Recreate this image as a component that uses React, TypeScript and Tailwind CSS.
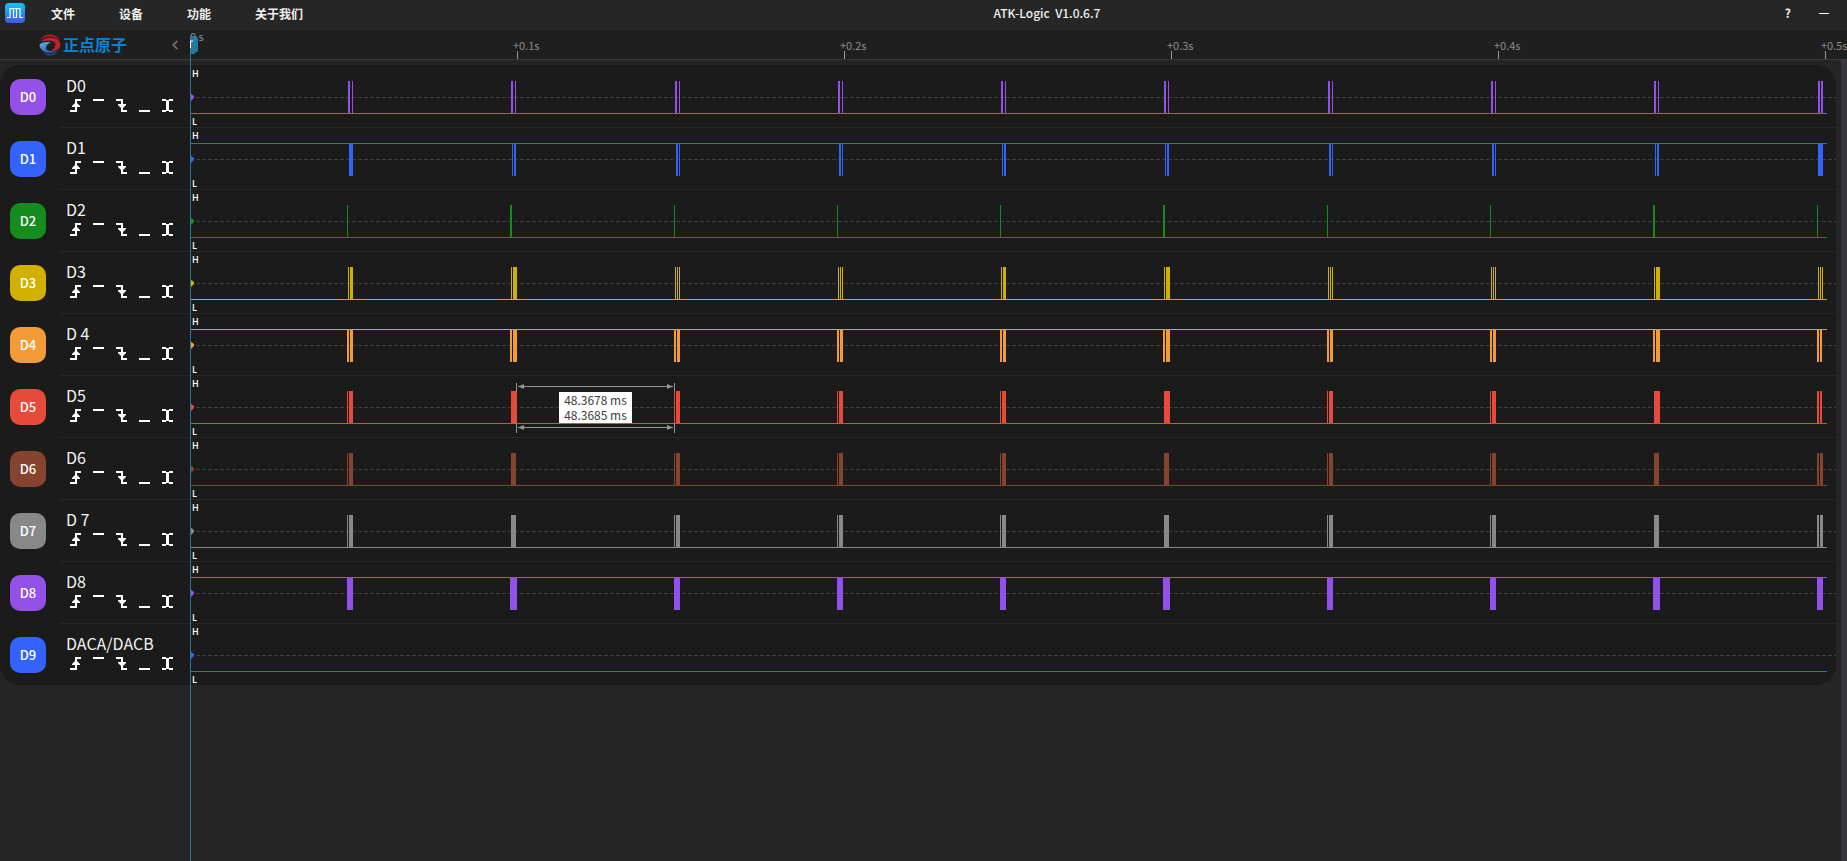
import React from 'react';
import { ChevronLeft } from 'lucide-react';

// [offset, width] in pixels, measured from the start of a burst
type Bar = [number, number];

interface Channel {
  id: string;
  name: string;
  color: string;
  idleHigh?: boolean;
  // one entry per burst shape, see BURSTS
  shapes?: Bar[][];
}

const MENU = ['文件', '设备', '功能', '关于我们'];
const TICKS = ['+0.1s', '+0.2s', '+0.3s', '+0.4s', '+0.5s'];
const WAVE_END = 1637;

// start of each burst and the index of the shape it uses
const BURSTS: [number, number][] = [
  [157, 0],
  [320, 1],
  [484, 2],
  [647, 2],
  [810, 3],
  [973, 1],
  [1137, 2],
  [1300, 2],
  [1463, 1],
  [1627, 4],
];

const CHANNELS: Channel[] = [
  {
    id: 'D0', name: 'D0', color: '#9351e8',
    shapes: [[[1, 2], [5, 1]], [[1, 2], [5, 1]], [[1, 2], [5, 1]], [[1, 2], [5, 1]], [[1, 2], [4, 2]]],
  },
  {
    id: 'D1', name: 'D1', color: '#3363fa', idleHigh: true,
    shapes: [[[2, 4]], [[2, 1], [4, 2]], [[2, 2], [5, 1]], [[2, 1], [4, 2]], [[1, 5]]],
  },
  {
    id: 'D2', name: 'D2', color: '#168c1e',
    shapes: [[[0, 1]], [[0, 2]], [[0, 1]], [[0, 1]], [[0, 1]]],
  },
  {
    id: 'D3', name: 'D3', color: '#d1b000',
    shapes: [[[1, 1], [3, 3]], [[1, 1], [3, 4]], [[1, 1], [3, 1], [5, 1]], [[1, 1], [3, 3]], [[1, 1], [3, 1], [5, 1]]],
  },
  {
    id: 'D4', name: 'D 4', color: '#f29b38', idleHigh: true,
    shapes: [[[0, 2], [3, 3]], [[0, 2], [3, 4]], [[0, 2], [3, 3]], [[0, 2], [3, 3]], [[0, 2], [3, 2]]],
  },
  {
    id: 'D5', name: 'D5', color: '#e54a3a',
    shapes: [[[0, 1], [2, 4]], [[1, 6]], [[0, 1], [2, 4]], [[0, 1], [2, 4]], [[0, 2], [3, 2]]],
  },
  {
    id: 'D6', name: 'D6', color: '#86432e',
    shapes: [[[0, 1], [2, 4]], [[1, 5]], [[0, 1], [2, 4]], [[0, 1], [2, 4]], [[0, 2], [3, 3]]],
  },
  {
    id: 'D7', name: 'D 7', color: '#888888',
    shapes: [[[0, 1], [2, 4]], [[1, 5]], [[0, 1], [2, 4]], [[0, 1], [2, 4]], [[0, 2], [3, 3]]],
  },
  {
    id: 'D8', name: 'D8', color: '#9351e8', idleHigh: true,
    shapes: [[[0, 6]], [[0, 7]], [[0, 6]], [[0, 6]], [[0, 6]]],
  },
  { id: 'D9', name: 'DACA/DACB', color: '#3363fa' },
];

const TRIGGERS = [
  { label: 'Rising edge', d: 'M0 11h7v2H0zM5 0h6v2H7v10H5zM6 3l4 4v1H2V7z' },
  { label: 'High level', d: 'M0 0h11v2H0z' },
  { label: 'Falling edge', d: 'M0 0h7v11h4v2H5V2H0zM6 10L2 6V5h8v1z' },
  { label: 'Low level', d: 'M0 11h11v2H0z' },
  { label: 'Either edge', d: 'M0 0h4v1h3V0h4v2H7v9h4v2H7v-1H4v1H0v-2h4V2H0z' },
];

const AppIcon = () => (
  <svg className="w-5 h-5" viewBox="0 0 20 20">
    <defs>
      <linearGradient id="appIcon" x1="0" y1="0" x2="0" y2="1">
        <stop offset="0" stopColor="#12c4fa" />
        <stop offset="1" stopColor="#3c5be2" />
      </linearGradient>
    </defs>
    <rect width="20" height="20" rx="4" fill="url(#appIcon)" />
    <path d="M2 14.5h3v-9h3.500v9h3v-9H15v9h3M8.500 5.500h3" fill="none" stroke="#fff" strokeWidth="1.200" />
  </svg>
);

const BrandMark = () => (
  <svg className="w-[22px] h-[22px]" viewBox="0 0 22 22">
    <defs>
      <linearGradient id="brandBlue" x1="0" y1="0" x2="1" y2="1">
        <stop offset="0" stopColor="#56bdf0" />
        <stop offset="1" stopColor="#1c3a8c" />
      </linearGradient>
    </defs>
    <path d="M1 7.500C2.500 3 6.500 0.500 11 0.500S19.500 3 21 7.500C18 3.500 14.500 2.500 11 2.500S4 3.500 1 7.500z" fill="#a81f2a" />
    <path d="M2 8C5 4.500 8 3.500 11.500 3.500 17 3.500 21.500 7 21.500 11c0 2.500-2 4.500-5.500 5.500-1.500.500-3 .500-4.500.500 3-1.500 5-4 5-6.500C16.500 7.500 11 5.500 2 8z" fill="#c4202c" />
    <path d="M0.500 11C1.500 8.500 6 7.500 12.500 8 9 9.500 6.500 12 7 14.500c.500 2.500 6 4 13 1.500C17.500 18 15 19 11.500 19 5 19 0.500 15 0.500 11z" fill="url(#brandBlue)" />
    <path d="M3 17c4 3.500 11 4 16 1-2 2.500-5 3.500-8 3.500S5 20 3 17z" fill="#26479f" />
  </svg>
);

const TitleBar = () => (
  <header className="h-[30px] shrink-0 flex items-center justify-between bg-[#262626] text-[#f0f0f0] pl-[5px] pr-[18px] pb-1">
    <div className="flex items-center gap-[26px]">
      <AppIcon />
      <nav className="flex gap-11 pt-0.5 text-xs font-bold">
        {MENU.map((item) => (
          <button key={item}>{item}</button>
        ))}
      </nav>
    </div>
    <h1 className="pl-1.5 text-xs font-medium whitespace-pre">ATK-Logic  V1.0.6.7</h1>
    <div className="flex items-center gap-7">
      <button className="text-xs font-bold">?</button>
      <button aria-label="Minimize" className="w-[10px] h-px bg-white" />
    </div>
  </header>
);

const Ruler = () => (
  <div className="h-[30px] shrink-0 flex bg-[#1f1f1f] border-b border-[#3b3b3b]">
    <div className="w-[190px] shrink-0 flex items-center pl-[39px] pr-[8px]">
      <BrandMark />
      <span className="pl-0.5 pb-px text-[16px] leading-5 font-bold text-[#0684d4]">正点原子</span>
      <button aria-label="Collapse" className="ml-auto text-[#777777]">
        <ChevronLeft size={14} strokeWidth={3} />
      </button>
    </div>
    <div className="w-[323px] shrink-0 text-[11px] leading-3 text-[#8c8c8c]">0 s</div>
    {TICKS.map((tick) => (
      <div key={tick} className="w-[327px] shrink-0 flex flex-col justify-end text-[11px] leading-[11px] text-[#8c8c8c]">
        {tick}
        <span className="ml-1 w-px h-2 bg-[#999999]" />
      </div>
    ))}
  </div>
);

const Wave: React.FC<{ channel: Channel }> = ({ channel }) => {
  const { color, idleHigh, shapes } = channel;

  return (
    <svg className="block w-full h-[61px]" shapeRendering="crispEdges">
      <line x1="6" y1="31.5" x2="100%" y2="31.5" stroke="#3d3d3d" strokeDasharray="4 2" />
      <rect x="0" y={idleHigh ? 15 : 47} width={WAVE_END} height="1" fill={color} />
      {shapes &&
        BURSTS.map(([start, shape]) =>
          shapes[shape].map(([offset, width]) => (
            <rect
              key={`${start}-${offset}`}
              x={start + offset}
              y={idleHigh ? 16 : 15}
              width={width}
              height="32"
              fill={color}
            />
          ))
        )}
      <path d="M0 27l4 3v2l-4 4z" fill={color} shapeRendering="auto" />
    </svg>
  );
};

// Width readout of the pulse gap under the pointer
const Measurement = () => (
  <div className="absolute left-[326px] top-[7px] w-[159px] h-[50px]">
    <svg className="block w-full h-full" viewBox="0 0 159 50" fill="#969696">
      <path d="M0 0h1v8H0zM158 0h1v8h-1zM0 41h1v9H0zM158 41h1v9h-1z" />
      <path d="M2 3h155v1H2zM2 44h155v1H2z" />
      <path d="M2 3.500l6-2.500v5zM157 3.500l-6-2.500v5zM2 44.500l6-2.500v5zM157 44.500l-6-2.500v5z" />
    </svg>
    <div className="absolute left-[43px] top-[9px] w-[73px] h-[31px] bg-white text-[#404040] text-[12px] leading-[15px] text-center">
      <div>48.3678 ms</div>
      <div>48.3685 ms</div>
    </div>
  </div>
);

const ChannelRow: React.FC<{ channel: Channel; first: boolean }> = ({ channel, first }) => (
  <div className="flex h-[62px]">
    <div className="w-[60px] shrink-0 pl-[10px] pt-[14px]">
      <button
        className="w-9 h-9 rounded-[10px] text-[13px] font-medium text-white"
        style={{ backgroundColor: channel.color }}
      >
        {channel.id}
      </button>
    </div>
    <div className={`flex-1 min-w-0 flex border-t ${first ? 'border-transparent' : 'border-[#262626]'}`}>
      <div className="w-[130px] shrink-0 pl-[6px] pt-[9px]">
        <div className="text-[16px] leading-5 text-[#f4f4f4]">{channel.name}</div>
        <div className="flex gap-3 pl-1 pt-1">
          {TRIGGERS.map((trigger) => (
            <button key={trigger.label} aria-label={trigger.label}>
              <svg className="block w-[11px] h-[13px]" viewBox="0 0 11 13" fill="#fff">
                <path d={trigger.d} />
              </svg>
            </button>
          ))}
        </div>
      </div>
      <div className="relative flex-1 min-w-0">
        <Wave channel={channel} />
        <span className="absolute left-0.5 top-0.5 text-[9px] leading-3 font-medium text-white">H</span>
        <span className="absolute left-0.5 top-[50px] text-[9px] leading-3 font-medium text-white">L</span>
        {channel.id === 'D5' && <Measurement />}
      </div>
    </div>
  </div>
);

// Trigger position: flag in the ruler and the line through all channels
const Cursor = () => (
  <div className="absolute left-[190px] top-9 bottom-0 w-2 pointer-events-none">
    <div className="h-full w-px bg-[#22789b]" />
    <svg className="absolute left-0 top-0 w-2 h-[19px]" viewBox="0 0 8 19">
      <path d="M0 0h6l2 2v13l-4 3H0z" fill="#2583ab" opacity="0.900" />
      <path d="M0 5h3M0.500 5v7" stroke="#fff" strokeWidth="1" />
    </svg>
  </div>
);

export default function App() {
  return (
    <div className="relative min-h-screen flex flex-col bg-[#252525] overflow-hidden font-['Noto_Sans_CJK_SC',sans-serif]">
      <TitleBar />
      <Ruler />
      <div className="flex-1 flex">
        <main className="flex-1 min-w-0 pt-[5px] pr-[5px]">
          <div className="bg-[#1b1b1b] rounded-[20px] overflow-hidden">
            {CHANNELS.map((channel, i) => (
              <ChannelRow key={channel.id} channel={channel} first={i === 0} />
            ))}
          </div>
        </main>
        <div className="w-[6px] shrink-0 bg-[#38373b]" />
      </div>
      <Cursor />
    </div>
  );
}
